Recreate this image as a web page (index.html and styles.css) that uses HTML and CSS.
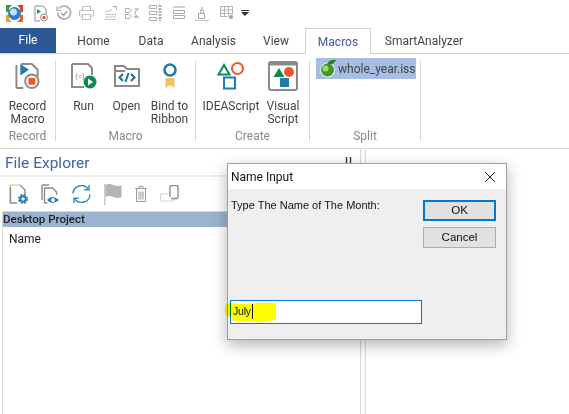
FILE: index.html
```html
<!DOCTYPE html>
<html lang="en">
<head>
    <meta charset="UTF-8">
    <meta name="viewport" content="width=device-width, initial-scale=1.0">
    <title>Macros</title>
    <link rel="stylesheet" href="styles.css">
</head>
<body>
    <div class="app">
        <!-- quick access bar -->
        <div class="quick">
            <svg width="17" height="17" viewBox="0 0 17 17">
                <path d="M0 0h6L3 3v4H0z" fill="#3f9a3f"/>
                <path d="M11 0h6v7h-3V3z" fill="#d9432a"/>
                <path d="M0 10h3v4l3 3H0z" fill="#e8a020"/>
                <path d="M17 10h-3v4l-3 3h6z" fill="#e8602a"/>
                <circle cx="8.5" cy="8.5" r="6.5" fill="#2f7fc8"/>
                <circle cx="7.5" cy="7" r="3.5" fill="#bfe0f7"/>
            </svg>
            <svg width="14" height="17" viewBox="0 0 14 17" fill="none">
                <path d="M1 1h8l3 3v5M6 16H1V1" stroke="#8d8d8d"/>
                <path d="M3 4l4 2.5L3 9z" fill="#2b7fb0"/>
                <circle cx="10" cy="12.5" r="3.5" stroke="#8d8d8d"/>
                <circle cx="10" cy="12.5" r="1.7" fill="#e8542a"/>
            </svg>
            <svg width="16" height="16" viewBox="0 0 16 16" fill="none" stroke="#a8a8a8" stroke-width="1.6">
                <path d="M3 3.5a6.5 6.5 0 1 1-1.4 4"/>
                <path d="M1 1.5v4h4" stroke-width="1.2"/>
                <path d="M5 8l2.5 2.5L11 6"/>
            </svg>
            <svg width="15" height="14" viewBox="0 0 15 14" fill="none" stroke="#bdbdbd">
                <path d="M3.5 4V.5h8V4M3.5 10H.5V4.5h14V10h-3"/>
                <path d="M3.5 8.5h8v5h-8z"/>
            </svg>
            <svg width="13" height="14" viewBox="0 0 13 14" fill="none" stroke="#c4c4c4">
                <path d="M1 8.5h11M1 11h11M1 13.5h11M1 6l7-2"/>
                <path d="M9 .5h3.500v3" stroke="#a0a0a0"/>
            </svg>
            <svg width="15" height="12" viewBox="0 0 15 12" fill="none" stroke="#a8a8a8">
                <path d="M.5 1.500h4l2 2-2 2h-4zM.5 7.500h4l2 2-2 2h-4z"/>
                <path d="M9 2h5M12 2L10 6l2 4H9h5"/>
            </svg>
            <svg width="14" height="16" viewBox="0 0 14 16" fill="none" stroke="#b0b0b0">
                <path d="M.5 .5h7v3h-7zM.5 6.500h7v3h-7zM.5 12.500h7v3h-7z"/>
                <path d="M11 0v16" stroke-dasharray="2 1" stroke-width="3"/>
            </svg>
            <svg width="12" height="14" viewBox="0 0 12 14" fill="none" stroke="#a8a8a8">
                <path d="M0 .5h12" stroke="#cfcfcf" stroke-width="3"/>
                <path d="M.5 4.500h11v3H.5zM.5 9.500h11v3H.5z"/>
            </svg>
            <svg width="14" height="15" viewBox="0 0 14 15" fill="none" stroke="#a8a8a8">
                <path d="M0 14.500h14" stroke="#c8c8c8"/>
                <path d="M3.500 7.500h6v5h-6zM5.500 7.500V4h3v3.500"/>
                <path d="M7 1v3" stroke="#c0a060"/>
            </svg>
            <svg width="14" height="14" viewBox="0 0 14 14" fill="none" stroke="#b5b5b5">
                <path d="M.5 .5h12v10H.5zM.5 4h12M.5 7.500h12M4.500 .5v10M8.500 .5v10"/>
                <circle cx="11" cy="11" r="2.500" fill="#a0a0a0" stroke="#fff"/>
            </svg>
            <svg width="8" height="6" viewBox="0 0 8 6">
                <path d="M0 0h8v1H0zM0 2h8L4 6z" fill="#333"/>
            </svg>
        </div>

        <!-- tabs -->
        <div class="tabs">
            <div class="tab-file">File</div>
            <div class="tab tab-home">Home</div>
            <div class="tab tab-data">Data</div>
            <div class="tab tab-analysis">Analysis</div>
            <div class="tab tab-view">View</div>
            <div class="tab-active">Macros</div>
            <div class="tab tab-smart">SmartAnalyzer</div>
        </div>

        <!-- ribbon -->
        <div class="ribbon">
            <div class="group group-record">
                <div class="group-btns">
                    <div class="rbtn">
                        <div class="rbtn-icon">
                            <svg width="26" height="27" viewBox="0 0 26 28" fill="none">
                                <path d="M6 1h11l6 6v7M8 26H3a2 2 0 0 1-2-2V2" stroke="#8a8a8a" stroke-width="2"/>
                                <path d="M5 1l9 6-9 6z" fill="#1f7bb0"/>
                                <circle cx="17" cy="19" r="7" stroke="#8a8a8a" stroke-width="2" fill="#fff"/>
                                <rect x="13.500" y="15.500" width="7" height="7" fill="#f0552b"/>
                            </svg>
                        </div>
                        <span>Record<br>Macro</span>
                    </div>
                </div>
                <div class="group-name">Record</div>
            </div>
            <div class="group group-macro">
                <div class="group-btns">
                    <div class="rbtn btn-run">
                        <div class="rbtn-icon">
                            <svg width="26" height="26" viewBox="0 0 26 26" fill="none">
                                <path d="M1 1h16l4 4v7M13 24H1V1" stroke="#8a8a8a" stroke-width="2"/>
                                <text class="brace" x="4" y="16">{=}</text>
                                <circle cx="19" cy="19" r="6.500" fill="#0d8a50"/>
                                <path d="M17 15.500l5 3.500-5 3.500z" fill="#fff"/>
                            </svg>
                        </div>
                        <span>Run</span>
                    </div>
                    <div class="rbtn btn-open">
                        <div class="rbtn-icon">
                            <svg width="26" height="22" viewBox="0 0 26 22" fill="none" stroke="#8a8a8a" stroke-width="2">
                                <path d="M1 21V1h9l3 3h12v17zM1 6h10"/>
                                <path d="M9 9l-3.500 3.500L9 16M17 9l3.500 3.500L17 16M14.500 8l-3 9" stroke="#1f6fa5"/>
                            </svg>
                        </div>
                        <span>Open</span>
                    </div>
                    <div class="rbtn btn-bind">
                        <div class="rbtn-icon">
                            <svg width="16" height="26" viewBox="0 0 16 26" fill="none">
                                <circle cx="8" cy="7" r="5.500" stroke="#1f7bb0" stroke-width="2.600"/>
                                <path d="M3.500 15h9v10L8 22l-4.500 3z" fill="#f0c35e"/>
                            </svg>
                        </div>
                        <span>Bind to<br>Ribbon</span>
                    </div>
                </div>
                <div class="group-name">Macro</div>
            </div>
            <div class="group group-create">
                <div class="group-btns">
                    <div class="rbtn btn-idea">
                        <div class="rbtn-icon">
                            <svg width="28" height="28" viewBox="0 0 28 28" fill="none" stroke-width="2">
                                <path d="M7 3l5.500 9.500H1.500z" stroke="#0d8a50"/>
                                <circle cx="20.500" cy="6.500" r="5.500" stroke="#f0552b"/>
                                <rect x="7" y="15.500" width="11" height="11" stroke="#1f7bb0"/>
                            </svg>
                        </div>
                        <span>IDEAScript</span>
                    </div>
                    <div class="rbtn btn-visual">
                        <div class="rbtn-icon">
                            <svg width="30" height="30" viewBox="0 0 30 30" fill="none">
                                <rect x="1" y="1" width="28" height="28" rx="2" fill="#fff" stroke="#8a8a8a" stroke-width="2"/>
                                <path d="M1 3h28" stroke="#8a8a8a" stroke-width="3"/>
                                <path d="M11 7l5.500 9h-11z" fill="#0d8a50"/>
                                <circle cx="21" cy="11" r="5" fill="#f0552b"/>
                                <rect x="12" y="17" width="9" height="9" fill="#1f7bb0"/>
                            </svg>
                        </div>
                        <span>Visual<br>Script</span>
                    </div>
                </div>
                <div class="group-name">Create</div>
            </div>
            <div class="group group-split">
                <div class="group-btns">
                    <div class="file-item">
                        <svg width="16" height="19" viewBox="0 0 16 19">
                            <circle cx="7.500" cy="11" r="7.500" fill="#e8eef8"/>
                            <path d="M7 5q3-5 9-4-3 6-9 4z" fill="#2f7d1f"/>
                            <circle cx="7.500" cy="11" r="6.500" fill="#3f9a24"/>
                            <circle cx="5.500" cy="9.500" r="3" fill="#9fd96c"/>
                        </svg>
                        <span>whole_year.iss</span>
                    </div>
                </div>
                <div class="group-name">Split</div>
            </div>
        </div>

        <!-- main area -->
        <div class="main">
            <div class="explorer">
                <div class="explorer-head">
                    <span class="explorer-title">File Explorer</span>
                    <svg class="pin" width="7" height="8" viewBox="0 0 7 8" fill="none" stroke="#333" stroke-width="1.400">
                        <path d="M1.500 0v7M5.500 0v7M0 7h7"/>
                    </svg>
                </div>
                <div class="explorer-tools">
                    <svg width="19" height="20" viewBox="0 0 19 20" fill="none">
                        <path d="M1 19V1h10" stroke="#e3b36c"/>
                        <path d="M1.500 19V3M11 1l5 5v5M1 19h7" stroke="#8a8a8a" stroke-width="1.400"/>
                        <circle cx="14" cy="15" r="2.800" stroke="#1f7bb0" stroke-width="2"/>
                        <circle cx="14" cy="15" r="4.300" stroke="#1f7bb0" stroke-width="1.400" stroke-dasharray="2 1.400"/>
                    </svg>
                    <svg width="18" height="20" viewBox="0 0 18 20" fill="none" stroke="#8a8a8a" stroke-width="1.400">
                        <path d="M1 1h7M1 1v15M3.500 19V4h8l4 4v3M3.500 19h3"/>
                        <path d="M6 16q5-6 12 0-7 6-12 0z" fill="#1f7bb0" stroke="none"/>
                        <circle cx="12" cy="16" r="2" fill="#fff" stroke="none"/>
                    </svg>
                    <svg width="19" height="18" viewBox="0 0 20 19" fill="none" stroke="#2f8fc4" stroke-width="1.500">
                        <path d="M1 9a9 9 0 0 1 16-5M19 10a9 9 0 0 1-16 5"/>
                        <path d="M18 0v5h-5M2 19v-5h5"/>
                    </svg>
                    <svg width="18" height="21" viewBox="0 0 18 21">
                        <path d="M0 0h1.500v21H0z" fill="#c8c8c8"/>
                        <path d="M1.500 1q4-2 8 0t8 0v12q-4 2-8 0t-8 0z" fill="#b4b4b4"/>
                    </svg>
                    <svg width="12" height="16" viewBox="0 0 12 16" fill="none" stroke="#9a9a9a">
                        <path d="M0 2.500h12M4 2.500V.5h4v2"/>
                        <path d="M1.500 3v12.500h9V3M4 5.500v8M6 5.500v8M8 5.500v8"/>
                    </svg>
                    <svg width="19" height="18" viewBox="0 0 19 18" fill="none">
                        <path d="M9 9H.5v7H14v-2" stroke="#d4d4d4"/>
                        <path d="M10 12V1.500a1 1 0 0 1 1-1h6a1 1 0 0 1 1 1v11a1 1 0 0 1-1 1h-6" stroke="#8f8f8f" stroke-width="1.400"/>
                    </svg>
                </div>
                <div class="project">
                    <div class="project-bar">Desktop Project</div>
                    <div class="project-name">Name</div>
                </div>
            </div>
            <div class="gutter"></div>
        </div>

        <!-- dialog sits on top of the app -->
        <div class="dialog">
            <div class="dialog-title">
                <span>Name Input</span>
                <svg width="12" height="12" viewBox="0 0 12 12" fill="none" stroke="#222">
                    <path d="M1 1l10 10M11 1L1 11"/>
                </svg>
            </div>
            <div class="dialog-body">
                <div class="dialog-top">
                    <div class="dialog-msg">Type The Name of The Month:</div>
                    <div class="dialog-btns">
                        <button class="btn btn-ok" type="button">OK</button>
                        <button class="btn" type="button">Cancel</button>
                    </div>
                </div>
                <div class="dialog-input"><span class="input-text">July</span><span class="caret"></span></div>
            </div>
        </div>

        <!-- yellow marker stroke painted over the screenshot -->
        <svg class="marker" width="52" height="22" viewBox="0 0 52 22">
            <path d="M0 5l2-2 4-1 8 1 20-1h17v17l-9 1-3 1-16-1H8l-1-4-5-1-2-3z" fill="#ffff00"/>
        </svg>
    </div>
</body>
</html>
```

FILE: styles.css
```css
html, body {
    margin: 0;
    padding: 0;
    background: #fff;
}
.app {
    position: relative;
    width: 569px;
    height: 414px;
    overflow: hidden;
    font-family: Roboto, sans-serif;
    font-size: 12px;
    color: #333;
}

/* quick access */
.quick {
    display: flex;
    align-items: center;
    height: 28px;
    box-sizing: border-box;
    padding: 0 0 2px 6px;
}
.quick svg:nth-child(2) { margin-left: 11px; }
.quick svg:nth-child(3) { margin-left: 8px; }
.quick svg:nth-child(4) { margin-left: 7px; }
.quick svg:nth-child(5) { margin-left: 10px; }
.quick svg:nth-child(6) { margin-left: 8px; }
.quick svg:nth-child(7) { margin-left: 9px; }
.quick svg:nth-child(8) { margin-left: 10px; }
.quick svg:nth-child(9) { margin-left: 10px; }
.quick svg:nth-child(10) { margin-left: 11px; }
.quick svg:nth-child(11) { margin-left: 7px; }

/* tabs */
.tabs {
    display: flex;
    height: 25px;
    border-bottom: 1px solid #d2d2d2;
}
.tab-file {
    width: 56px;
    background: #2b5797;
    color: #fff;
    text-align: center;
    line-height: 25px;
}
.tab {
    text-align: center;
    line-height: 27px;
    color: #444;
}
.tab-home { width: 75px; }
.tab-data { width: 40px; }
.tab-analysis { width: 85px; }
.tab-view { width: 40px; }
.tab-active {
    box-sizing: border-box;
    width: 66px;
    height: 26px;
    margin-left: 9px;
    border: 1px solid #d2d2d2;
    border-bottom: none;
    background: #fff;
    color: #3f57a6;
    text-align: center;
    line-height: 26px;
}
.tab-smart { width: 106px; }

/* ribbon */
.ribbon {
    display: flex;
    height: 95px;
    box-sizing: border-box;
    padding-top: 6px;
    border-bottom: 1px solid #d8d8d8;
}
.group {
    display: flex;
    flex-direction: column;
    height: 81px;
    box-sizing: border-box;
    border-right: 1px solid #d8d8d8;
}
.group-record { width: 56px; }
.group-macro { width: 140px; }
.group-create { width: 114px; }
.group-split { width: 111px; }
.group-btns {
    display: flex;
    flex: 1;
}
.group-name {
    text-align: center;
    color: #8a8a8a;
    line-height: 14px;
    padding-top: 2px;
    margin-bottom: -2px;
}
.rbtn {
    display: flex;
    flex-direction: column;
    align-items: center;
    text-align: center;
    line-height: 13px;
    color: #444;
}
.rbtn-icon {
    display: flex;
    align-items: center;
    justify-content: center;
    height: 32px;
    margin-bottom: 8px;
}
.rbtn span { white-space: nowrap; }
.group-record .rbtn { width: 58px; }
.btn-run { width: 43px; margin-left: 6px; }
.btn-open { width: 43px; }
.btn-bind { width: 43px; }
.btn-idea { width: 70px; }
.btn-visual { width: 34px; }
.brace {
    font-size: 8px;
    fill: #8a8a8a;
}
.file-item {
    display: flex;
    align-items: center;
    gap: 2px;
    width: 100px;
    height: 21px;
    box-sizing: border-box;
    margin: -2px 0 0 6px;
    padding-left: 4px;
    background: #a6bee3;
    color: #444;
}

/* file explorer */
.main {
    display: flex;
    height: 265px;
}
.explorer {
    width: 360px;
    border-right: 1px solid #d8d8d8;
    display: flex;
    flex-direction: column;
}
.explorer-head {
    display: flex;
    justify-content: space-between;
    height: 28px;
    padding: 4px 8px 0 5px;
    box-sizing: border-box;
    border-bottom: 2px solid #ececec;
}
.explorer-title {
    font-size: 15.5px;
    line-height: 20px;
    color: #3f63a6;
}
.pin { margin-top: 4px; }
.explorer-tools {
    display: flex;
    align-items: center;
    gap: 13px;
    height: 34px;
    padding-left: 9px;
}
.project {
    flex: 1;
    margin-left: 2px;
    border-left: 1px solid #d8d8d8;
    border-top: 1px solid #d8d8d8;
}
.project-bar {
    height: 15px;
    background: #9ab3d0;
    color: #222;
    font-size: 11.5px;
    font-weight: 500;
    line-height: 15px;
}
.project-name {
    padding: 5px 0 0 6px;
    color: #222;
}
.gutter {
    width: 4px;
    border-right: 1px solid #d8d8d8;
}

/* dialog */
.dialog {
    position: absolute;
    left: 227px;
    top: 163px;
    width: 280px;
    height: 177px;
    box-sizing: border-box;
    border: 1px solid #a0a0a0;
    box-shadow: 0 5px 14px rgba(0, 0, 0, 0.3);
    background: #efefef;
    font-family: "Liberation Sans", Arial, sans-serif;
    font-size: 11px;
    color: #111;
}
.dialog-title {
    display: flex;
    justify-content: space-between;
    align-items: center;
    height: 25px;
    padding: 0 10px 0 3px;
    background: #fff;
    font-family: Roboto, sans-serif;
    font-size: 12px;
}
.dialog-body {
    padding: 10px 10px 0 2px;
}
.dialog-top {
    display: flex;
    justify-content: space-between;
    height: 101px;
}
.dialog-msg { padding: 0 0 0 1px; }
.dialog-btns {
    display: flex;
    flex-direction: column;
    gap: 6px;
    padding-top: 1px;
}
.btn {
    width: 73px;
    height: 21px;
    padding: 0 0 1px;
    border: 1px solid #adadad;
    background: #e1e1e1;
    font: inherit;
    font-size: 11.5px;
    color: #111;
}
.btn-ok {
    border: 2px solid #0078d7;
}
.dialog-input {
    display: flex;
    align-items: center;
    width: 192px;
    height: 24px;
    box-sizing: border-box;
    border: 1px solid #0078d7;
    background: #fff;
    padding-left: 2px;
    font-size: 10.5px;
    letter-spacing: -0.2px;
}
.input-text { margin-top: -2px; }
.caret {
    width: 1px;
    height: 15px;
    margin: -2px 0 0 1px;
    background: #111;
}
.marker {
    position: absolute;
    left: 225px;
    top: 301px;
    mix-blend-mode: multiply;
}
```
